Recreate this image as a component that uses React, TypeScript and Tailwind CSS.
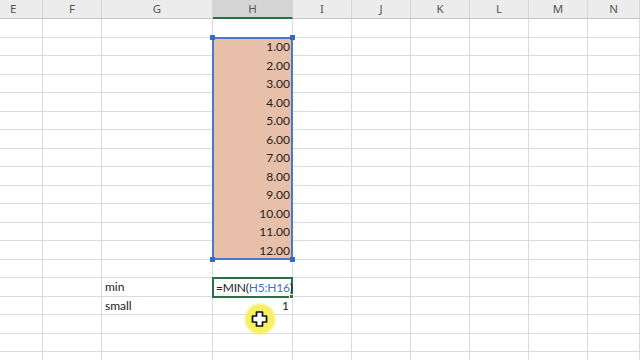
const cols = ["E", "F", "G", "H", "I", "J", "K", "L", "M", "N"];
const widths = ["w-[43px]", "w-[59px]", "w-[111px]", "w-[80px]", "w-[59px]", "w-[59px]", "w-[59px]", "w-[59px]", "w-[59px]", "w-[52px]"];

const rowCount = 19;
const values = ["1.00", "2.00", "3.00", "4.00", "5.00", "6.00", "7.00", "8.00", "9.00", "10.00", "11.00", "12.00"];

function Cell({ i, children, fill, right }: { i: number; children?: React.ReactNode; fill?: boolean; right?: boolean }) {
  return (
    <div
      className={`${widths[i]} shrink-0 h-full flex items-center px-[3px] ${
        fill ? "bg-[#e8c0aa]" : "border-r border-b border-[#dcdcdc]"
      } ${right ? "justify-end" : ""}`}
    >
      {children}
    </div>
  );
}

function Row({ r }: { r: number }) {
  const h = r % 2 === 0 ? "h-[19px]" : "h-[18px]";
  const inSel = r >= 1 && r <= 12;
  return (
    <div className={`flex ${h}`}>
      {cols.map((_, i) => {
        if (i === 3 && inSel) return <Cell key={i} i={i} fill right>{values[r - 1]}</Cell>;
        if (i === 2 && r === 14) return <Cell key={i} i={i}>min</Cell>;
        if (i === 2 && r === 15) return <Cell key={i} i={i}>small</Cell>;
        if (i === 3 && r === 15) return <Cell key={i} i={i} right>1</Cell>;
        return <Cell key={i} i={i} />;
      })}
    </div>
  );
}

function CursorSpot() {
  return (
    <svg width="36" height="36" viewBox="0 0 36 36" className="absolute left-[242px] top-[301px]">
      <defs>
        <radialGradient id="spot" cx="50%" cy="50%" r="50%">
          <stop offset="0%" stopColor="#f8ef55" />
          <stop offset="80%" stopColor="#f7ef68" />
          <stop offset="100%" stopColor="#f7ef70" stopOpacity="0" />
        </radialGradient>
      </defs>
      <circle cx="18" cy="18" r="17" fill="url(#spot)" />
      <path
        d="M14.5 11h6v4h4v6h-4v4h-6v-4h-4v-6h4z"
        fill="#fff"
        stroke="#111"
        strokeWidth="1.7"
        strokeLinejoin="round"
      />
    </svg>
  );
}

export default function App() {
  return (
    <div className="relative w-[640px] h-[360px] overflow-hidden bg-white text-[#222] text-[12px] font-['Lato','Liberation_Sans',sans-serif]">
      <div className="flex h-[19px] bg-[#ececec] text-[#555] text-[11.5px] font-['Noto_Sans','Liberation_Sans',sans-serif]">
        {cols.map((c, i) => (
          <div
            key={c}
            className={`${widths[i]} shrink-0 h-full flex items-center border-r border-[#d4d4d4] ${
              i === 0 ? "pl-[10px]" : "justify-center"
            } ${i === 3 ? "bg-[#d4d4d4] border-b-2 border-b-[#217346]" : "border-b border-b-[#c8c8c8]"}`}
          >
            {c}
          </div>
        ))}
      </div>
      {Array.from({ length: rowCount }, (_, r) => (
        <Row key={r} r={r} />
      ))}

      {/* selected range H5:H16 */}
      <div className="absolute left-[212px] top-[37px] w-[81px] h-[223px] border-2 border-[#4a78c8] pointer-events-none">
        <span className="absolute -left-[4px] -top-[4px] w-[5px] h-[5px] bg-[#3a68bf]" />
        <span className="absolute -right-[4px] -top-[4px] w-[5px] h-[5px] bg-[#3a68bf]" />
        <span className="absolute -left-[4px] -bottom-[4px] w-[5px] h-[5px] bg-[#3a68bf]" />
        <span className="absolute -right-[4px] -bottom-[4px] w-[5px] h-[5px] bg-[#3a68bf]" />
      </div>

      {/* active cell with formula */}
      <div className="absolute left-[212px] top-[277px] w-[81px] h-[21px] border-2 border-[#2f6f48] bg-white">
        <span className="absolute -right-[3px] -bottom-[3px] w-[5px] h-[5px] bg-[#2f6f48] border border-white" />
        <div className="relative flex items-center h-full pl-[2px] whitespace-nowrap text-[12px] tracking-[-0.2px]">
          <span>=MIN(</span>
          <span className="text-[#4472c4]">H5:H16</span>
          <span>)</span>
        </div>
      </div>

      <CursorSpot />
    </div>
  );
}
